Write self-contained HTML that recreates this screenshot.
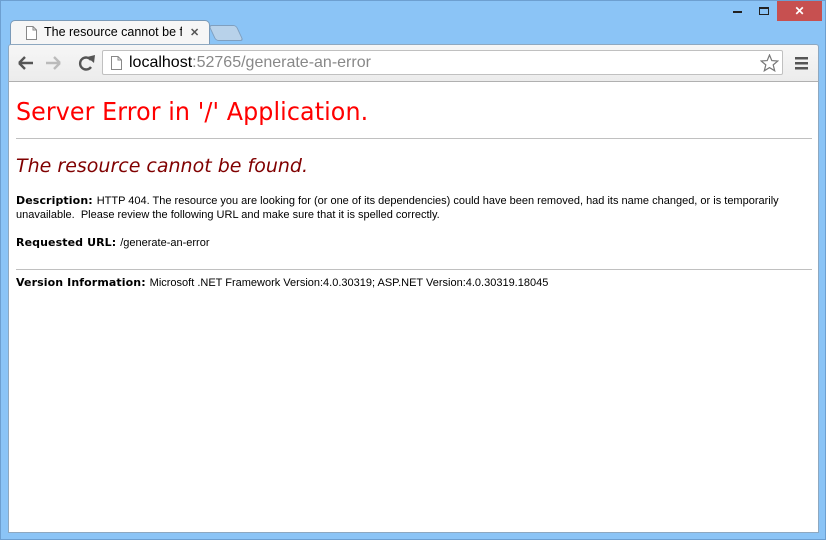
<!DOCTYPE html>
<html><head><style>
*{margin:0;padding:0;box-sizing:border-box}
body{width:826px;height:540px;background:#8bc4f6;position:relative;overflow:hidden;font-family:"Liberation Sans",sans-serif}
.win{position:absolute;left:0;top:0;width:826px;height:540px;border:1px solid #6d9fd0;}
.close{position:absolute;left:777px;top:1px;width:45px;height:20px;background:#c75050;color:#fff;font-size:12px;text-align:center;line-height:20px;font-weight:bold}
.min{position:absolute;left:733px;top:11px;width:9px;height:2px;background:#222}
.max{position:absolute;left:759px;top:7px;width:10px;height:8px;border:1px solid #222;border-top-width:2px}
.tab{position:absolute;left:10px;top:20px;width:200px;height:25px;background:#f6f6f6;border:1px solid #7a9ab8;border-bottom:none;border-radius:5px 5px 0 0}
.tab2{position:absolute;left:212px;top:25px;width:28px;height:16px;background:#b8d2ea;border:1px solid #7f9fbf;border-radius:3px;transform:skewX(25deg)}
.toolbar{position:absolute;left:8px;top:44px;width:811px;height:38px;background:linear-gradient(#f6f6f6,#ececec);border:1px solid #8ea8c0;border-bottom:1px solid #b0b0b0;border-radius:3px 3px 0 0}
.url{position:absolute;left:102px;top:50px;width:681px;height:25px;background:#fff;border:1px solid #c0c0c0;border-radius:2px;font-size:16px;line-height:23px;padding-left:26px;color:#888}
.content{position:absolute;left:8px;top:82px;width:811px;height:451px;background:#fff;border-left:1px solid #8ea8c0;border-right:1px solid #8ea8c0}
.bottom{position:absolute;left:8px;top:532px;width:811px;height:1px;background:#8ea8c0}
h1{position:absolute;left:7px;top:15px;color:#f00;font-weight:normal;font-size:24.5px;letter-spacing:0.1px;font-family:"DejaVu Sans",sans-serif;transform:scaleX(0.97);transform-origin:left}
hr{position:absolute;left:7px;width:796px;border:none;height:1px;background:#c0c0c0}
h2{position:absolute;left:7px;top:73px;color:#800000;font-style:italic;font-weight:normal;font-size:19px;font-family:"DejaVu Sans",sans-serif;transform:scaleX(1.0);transform-origin:left}
.p{position:absolute;left:7px;font-size:11px;color:#000;line-height:14px}
b{font-family:"DejaVu Sans",sans-serif;font-size:11px;letter-spacing:0.1px}
</style></head><body>
<div class="win"></div>
<div class="min"></div><div class="max"></div><div class="close">✕</div>
<div class="tab2"></div>
<div class="tab">
<svg style="position:absolute;left:15px;top:5px" width="11" height="14"><path d="M0.5 0.5H7L10.5 4V13.5H0.5Z M7 0.5V4H10.5" fill="#fff" stroke="#888"/></svg>
<span style="position:absolute;left:33px;top:4px;font-size:12.5px;color:#000;white-space:nowrap;width:138px;overflow:hidden">The resource cannot be fo<span style="color:#bbb">u</span></span>
<span style="position:absolute;left:179px;top:5px;font-size:11px;color:#555;font-weight:bold">✕</span>
</div>
<div class="toolbar">
<svg style="position:absolute;left:8px;top:10px" width="90" height="18">
<path d="M2 8H16 M2 8L8 2 M2 8L8 14" stroke="#555" stroke-width="2.4" fill="none"/>
<path d="M29 8H43 M43 8L37 2 M43 8L37 14" stroke="#bbb" stroke-width="2.4" fill="none"/>
<path d="M81 5A6 6 0 1 0 81 12" stroke="#555" stroke-width="2.4" fill="none" transform="translate(-7,0)"/><path d="M70 1L77 7L78 -1Z" fill="#555" transform="translate(0,1)"/>
</svg>
<svg style="position:absolute;left:786px;top:12px" width="14" height="13"><rect y="0" width="13" height="2.5" fill="#555"/><rect y="5" width="13" height="2.5" fill="#555"/><rect y="10" width="13" height="2.5" fill="#555"/></svg>
</div>
<div class="url">
<svg style="position:absolute;left:8px;top:5px" width="11" height="14"><path d="M0.5 0.5H7L10.5 4V13.5H0.5Z M7 0.5V4H10.5" fill="#fff" stroke="#888"/></svg>
<span style="color:#000">localhost</span>:52765/generate-an-error
<svg style="position:absolute;left:657px;top:3px" width="19" height="18"><path d="M9.5 1L11.8 6.6L17.8 7L13.2 10.9L14.7 16.8L9.5 13.6L4.3 16.8L5.8 10.9L1.2 7L7.2 6.6Z" fill="#fff" stroke="#777" stroke-width="1.2"/></svg>
</div>
<div class="content">
<h1>Server Error in '/' Application.</h1>
<hr style="top:56px">
<h2>The resource cannot be found.</h2>
<div class="p" style="top:112px;width:790px"><b>Description: </b>HTTP 404. The resource you are looking for (or one of its dependencies) could have been removed, had its name changed, or is temporarily unavailable. &nbsp;Please review the following URL and make sure that it is spelled correctly.</div>
<div class="p" style="top:154px"><b>Requested URL: </b>/generate-an-error</div>
<hr style="top:187px">
<div class="p" style="top:194px"><b>Version Information: </b>Microsoft .NET Framework Version:4.0.30319; ASP.NET Version:4.0.30319.18045</div>
</div>
<div class="bottom"></div>
</body></html>
